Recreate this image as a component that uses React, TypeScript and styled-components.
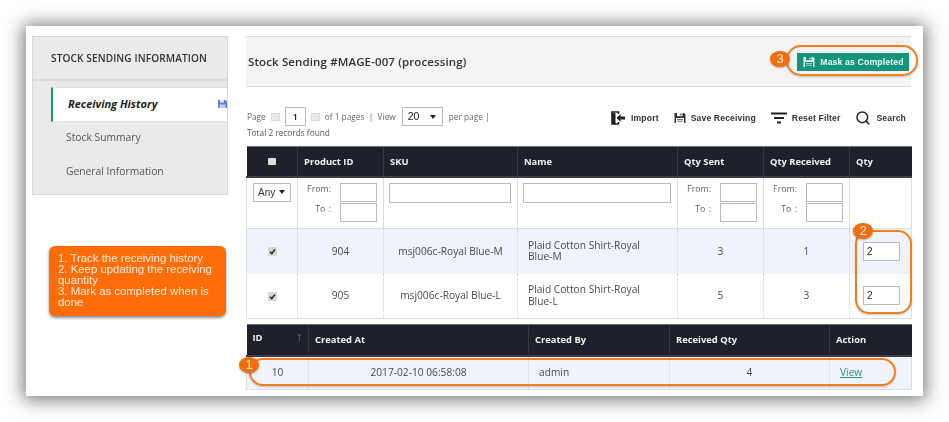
import React from "react";
import styled, { createGlobalStyle } from "styled-components";
import { Search } from "lucide-react";

const Global = createGlobalStyle`
  html, body { margin: 0; padding: 0; background: #fff; }
  body { font-family: "Open Sans", "Liberation Sans", sans-serif; color: #444; overflow: hidden; }
  * { box-sizing: border-box; }
`;

const Page = styled.div`
  width: 949px;
  height: 422px;
  padding: 26px;
`;
const Sheet = styled.div`
  position: relative;
  width: 897px;
  height: 370px;
  background: #fff;
  padding: 10px 12px 0 6px;
  display: flex;
  gap: 18px;
  box-shadow: 0 1px 17px 3px rgba(0, 0, 0, 0.52);
  filter: blur(0.45px);
`;
const Side = styled.aside`
  width: 196px;
  flex: none;
`;
const SideBox = styled.div`
  height: 159px;
  background: #eaeaea;
  border: 1px solid #d5d7de;
`;
const SideTitle = styled.h2`
  margin: 0;
  height: 44px;
  border-bottom: 2px solid #d8dae0;
  padding: 0 0 0 18px;
  font-size: 10.1px;
  line-height: 42px;
  font-weight: 600;
  color: #333;
  letter-spacing: 0.1px;
`;
const SideNav = styled.nav`
  padding: 6px 0 0 18px;
  display: flex;
  flex-direction: column;
`;
const ActiveItem = styled.a`
  position: relative;
  height: 35px;
  background: #fff;
  border-left: 2px solid #1b9a80;
  border-top: 1px solid #dfe0e5;
  border-bottom: 1px solid #dfe0e5;
  padding-left: 15px;
  font-size: 11px;
  line-height: 31px;
  font-weight: 700;
  font-style: italic;
  color: #222;
`;
const SideIcon = styled.svg`
  position: absolute;
  right: 0;
  top: 12px;
`;
const NavItem = styled.a`
  height: 34px;
  padding-left: 15px;
  font-size: 10.3px;
  line-height: 31px;
  color: #555;
`;
const Callout = styled.div`
  margin: 51px 0 0 17px;
  width: 177px;
  height: 70px;
  background: #ff6d0a;
  border-radius: 6px;
  padding: 7px 8px 0 9px;
  font-family: "Liberation Sans", Arial, sans-serif;
  font-size: 11.4px;
  line-height: 11.1px;
  color: #ffeedd;
  box-shadow: 0 2px 3px rgba(0, 0, 0, 0.45);
`;
const Main = styled.main`
  width: 665px;
  flex: none;
`;
const Head = styled.header`
  height: 51px;
  background: #f4f4f4;
  border-top: 1px solid #dcdde2;
  border-bottom: 1px solid #dcdde2;
  padding: 0 2px;
  display: flex;
  align-items: center;
  justify-content: space-between;
`;
const Title = styled.h1`
  margin: 0;
  font-size: 11.5px;
  font-weight: 600;
  color: #333;
  letter-spacing: 0.12px;
`;
const Complete = styled.button`
  width: 112px;
  height: 18px;
  border: 0;
  padding: 0 0 0 1px;
  background: #14957b;
  color: #eafff8;
  font-family: "Liberation Sans", Arial, sans-serif;
  font-size: 8.7px;
  font-weight: 700;
  letter-spacing: 0.14px;
  display: flex;
  align-items: center;
  justify-content: center;
  gap: 5px;
`;
const Bar = styled.div`
  height: 59px;
  padding: 20px 5px 0 1px;
  display: flex;
  justify-content: space-between;
`;
const Pager = styled.div`
  font-size: 8.3px;
  color: #666;
  line-height: 15px;
`;
const PagerLine = styled.div`
  display: flex;
  align-items: center;
  gap: 3px;
  height: 19px;
`;
const Arrow = styled.span`
  width: 9px;
  height: 8px;
  background: #e8e8e8;
  border: 1px solid #d8d8d8;
  margin: 0 2px;
`;
const PageBox = styled.span`
  width: 21px;
  height: 19px;
  border: 1px solid #b8bac2;
  font-size: 9.5px;
  font-weight: 600;
  color: #222;
  text-align: center;
  line-height: 18px;
`;
const ViewBox = styled.span`
  width: 41px;
  height: 19px;
  border: 1px solid #b8bac2;
  margin: 0 3px;
  padding: 0 6px 0 5px;
  display: flex;
  align-items: center;
  justify-content: space-between;
  font-family: "Liberation Sans", Arial, sans-serif;
  font-size: 10.5px;
  color: #222;
`;
const Caret = styled.span`
  width: 0;
  height: 0;
  border-left: 3px solid transparent;
  border-right: 3px solid transparent;
  border-top: 4px solid #222;
`;
const Total = styled.div`
  margin-top: -1px;
  color: #555;
`;
const Tools = styled.div`
  display: flex;
  align-items: flex-start;
  gap: 15px;
  padding-top: 3px;
`;
const Tool = styled.span`
  display: flex;
  align-items: center;
  gap: 5px;
  height: 16px;
  font-family: "Liberation Sans", Arial, sans-serif;
  font-size: 8.6px;
  font-weight: 700;
  color: #333;
  letter-spacing: 0.15px;
`;
const Table = styled.table`
  width: 665px;
  table-layout: fixed;
  border-collapse: collapse;
  font-size: 10.2px;
`;
const Col = styled.col<{ $w: number }>`
  width: ${(p) => p.$w}px;
`;
const Th = styled.th<{ $h?: number }>`
  height: ${(p) => p.$h ?? 30}px;
  background: #1e212b;
  color: #f2f2f2;
  font-size: 9.4px;
  font-weight: 700;
  text-align: left;
  padding: 0 6px;
  border-left: 1px solid #34373f;
  border-top: 1px solid #6a6c72;
  border-bottom: 2px solid #3b3e46;
  &:first-child { border-left: 0; }
`;
const HeadCheck = styled.span`
  display: block;
  width: 8px;
  height: 7px;
  margin: 0 auto;
  background: #ddd;
  border-radius: 1px;
`;
const IdHead = styled.div`
  display: flex;
  justify-content: space-between;
  margin-top: -4px;
`;
const SortMark = styled.span`
  font-weight: 400;
  color: #7c7f87;
  font-size: 12px;
  line-height: 12px;
`;
const FilterTd = styled.td`
  height: 52px;
  vertical-align: top;
  border: 1px solid #dcdde3;
  padding: 5px 6px 5px 5px;
  background: #fff;
`;
const AnyBox = styled.span`
  width: 38px;
  height: 19px;
  margin-left: 1px;
  border: 1px solid #b8bac2;
  display: flex;
  align-items: center;
  justify-content: space-between;
  padding: 0 5px 0 4px;
  font-family: "Liberation Sans", Arial, sans-serif;
  font-size: 10px;
  color: #333;
`;
const Range = styled.div`
  display: grid;
  grid-template-columns: auto 37px;
  justify-content: end;
  align-items: start;
  gap: 1px 9px;
  font-size: 8.8px;
  color: #666;
`;
const RangeLabel = styled.span`
  justify-self: end;
  line-height: 13px;
  word-spacing: 1px;
`;
const Field = styled.input<{ $h?: number }>`
  display: block;
  width: 100%;
  height: ${(p) => p.$h ?? 19}px;
  margin: 0;
  padding: 0 3px;
  border: 1px solid #b8bac2;
  background: #fff;
  outline: 0;
  font-family: "Liberation Sans", Arial, sans-serif;
  font-size: 10px;
  color: #222;
`;
const Row = styled.tr<{ $alt?: boolean }>`
  background: ${(p) => (p.$alt ? "#f0f3fb" : "#fff")};
`;
const Td = styled.td<{ $left?: boolean; $h?: number; $pad?: number }>`
  height: ${(p) => p.$h ?? 45}px;
  padding: 0 ${(p) => p.$pad ?? 10}px 0 10px;
  text-align: ${(p) => (p.$left ? "left" : "center")};
  line-height: 11.5px;
  color: #4a4a4a;
  border-left: 1px dotted #cfd1d7;
  &:first-child { border-left: 1px solid #dcdde3; }
  &:last-child { border-right: 1px solid #dcdde3; }
  tr:last-child > & { border-bottom: 1px solid #dcdde3; }
`;
const Check = styled.span`
  display: inline-flex;
  align-items: center;
  justify-content: center;
  width: 9px;
  height: 9px;
  background: #d6d6d6;
  border-radius: 1px;
  vertical-align: middle;
`;
const QtyField = styled(Field)`
  width: 37px;
  margin-left: 3px;
`;
const Spacer = styled.div`
  height: 5px;
`;
const ViewLink = styled.a`
  color: #1f9a82;
  text-decoration: underline;
`;
const Ring = styled.div<{ $x: number; $y: number; $w: number; $h: number; $r: number }>`
  position: absolute;
  left: ${(p) => p.$x}px;
  top: ${(p) => p.$y}px;
  width: ${(p) => p.$w}px;
  height: ${(p) => p.$h}px;
  border: 2px solid #f27f1c;
  border-radius: ${(p) => p.$r}px;
  box-shadow: 0 1px 2px rgba(0, 0, 0, 0.22);
  pointer-events: none;
`;
const Badge = styled.div<{ $x: number; $y: number }>`
  position: absolute;
  left: ${(p) => p.$x}px;
  top: ${(p) => p.$y}px;
  width: 20px;
  height: 16px;
  border-radius: 50%;
  background: #f26d0c;
  color: #ffeedd;
  font-family: "Liberation Sans", Arial, sans-serif;
  font-size: 13px;
  line-height: 16px;
  text-align: center;
  box-shadow: 0 1px 2px rgba(0, 0, 0, 0.3);
`;

const Floppy = ({ size = 12, body = "#333", light = "#fff" }: { size?: number; body?: string; light?: string }) => (
  <svg width={size} height={size} viewBox="0 0 12 12">
    <path d="M0.5 1h9.5l1.5 1.5v8.5h-11z" fill={body} />
    <rect x="3" y="1" width="5.5" height="3.2" fill={light} />
    <rect x="6.3" y="1.5" width="1.2" height="2" fill={body} />
    <rect x="2" y="6" width="8" height="5" fill={light} />
    <path d="M3 7.5h6M3 9.2h6" stroke={body} strokeWidth="0.7" />
  </svg>
);

const ImportIcon = () => (
  <svg width="15" height="14" viewBox="0 0 15 14">
    <path d="M7.5 3V1H1v12h6.5v-2" fill="none" stroke="#222" strokeWidth="1.6" />
    <path d="M1 1l3.5 1.4v11.2L1 13z" fill="#222" />
    <path d="M14 5.5H9.5V3L5.5 7l4 4V8.5H14z" fill="#222" />
  </svg>
);

const FilterIcon = () => (
  <svg width="16" height="12" viewBox="0 0 16 12">
    <path d="M0 1.5h16M3 6h10M6 10.5h4" stroke="#222" strokeWidth="1.8" />
  </svg>
);

const Tick = () => (
  <svg width="7" height="7" viewBox="0 0 7 7">
    <path d="M1 3.8l1.8 1.8L6 1.4" fill="none" stroke="#222" strokeWidth="1.5" />
  </svg>
);

const RangeFilter = () => (
  <Range>
    <RangeLabel>From:</RangeLabel>
    <Field readOnly $h={19} />
    <RangeLabel>To :</RangeLabel>
    <Field readOnly $h={19} />
  </Range>
);

const rows = [
  { id: "904", sku: "msj006c-Royal Blue-M", name: "Plaid Cotton Shirt-Royal Blue-M", sent: "3", rec: "1", alt: true },
  { id: "905", sku: "msj006c-Royal Blue-L", name: "Plaid Cotton Shirt-Royal Blue-L", sent: "5", rec: "3", alt: false },
];

export default function App() {
  return (
    <Page>
      <Global />
      <Sheet>
        <Side>
          <SideBox>
            <SideTitle>STOCK SENDING INFORMATION</SideTitle>
            <SideNav>
              <ActiveItem>
                Receiving History
                <SideIcon width="9" height="8" viewBox="0 0 9 8">
                  <path d="M0 0h7.5L9 1.5V8H0z" fill="#5b83c4" />
                  <rect x="2" y="0" width="4" height="2.6" fill="#dfe7f5" />
                  <rect x="1.5" y="4.5" width="6" height="3.5" fill="#b9cbe8" />
                </SideIcon>
              </ActiveItem>
              <NavItem>Stock Summary</NavItem>
              <NavItem>General Information</NavItem>
            </SideNav>
          </SideBox>
          <Callout>
            1. Track the receiving history
            <br />
            2. Keep updating the receiving quantity
            <br />
            3. Mark as completed when is done
          </Callout>
        </Side>
        <Main>
          <Head>
            <Title>Stock Sending #MAGE-007 (processing)</Title>
            <Complete>
              <Floppy size={12} body="#d9efe9" light="#14957b" />
              Mask as Completed
            </Complete>
          </Head>
          <Bar>
            <Pager>
              <PagerLine>
                Page <Arrow /> <PageBox>1</PageBox> <Arrow /> of 1 pages &nbsp;|&nbsp; View
                <ViewBox>
                  20 <Caret />
                </ViewBox>
                per page |
              </PagerLine>
              <Total>Total 2 records found</Total>
            </Pager>
            <Tools>
              <Tool>
                <ImportIcon /> Import
              </Tool>
              <Tool>
                <Floppy /> Save Receiving
              </Tool>
              <Tool>
                <FilterIcon /> Reset Filter
              </Tool>
              <Tool>
                <Search size={16} strokeWidth={2.2} color="#222" /> Search
              </Tool>
            </Tools>
          </Bar>
          <Table>
            <colgroup>
              <Col $w={51} />
              <Col $w={86} />
              <Col $w={134} />
              <Col $w={160} />
              <Col $w={86} />
              <Col $w={86} />
              <Col $w={62} />
            </colgroup>
            <thead>
              <tr>
                <Th>
                  <HeadCheck />
                </Th>
                <Th>Product ID</Th>
                <Th>SKU</Th>
                <Th>Name</Th>
                <Th>Qty Sent</Th>
                <Th>Qty Received</Th>
                <Th>Qty</Th>
              </tr>
            </thead>
            <tbody>
              <tr>
                <FilterTd>
                  <AnyBox>
                    Any <Caret />
                  </AnyBox>
                </FilterTd>
                <FilterTd>
                  <RangeFilter />
                </FilterTd>
                <FilterTd>
                  <Field readOnly $h={20} />
                </FilterTd>
                <FilterTd>
                  <Field readOnly $h={20} />
                </FilterTd>
                <FilterTd>
                  <RangeFilter />
                </FilterTd>
                <FilterTd>
                  <RangeFilter />
                </FilterTd>
                <FilterTd />
              </tr>
              {rows.map((r) => (
                <Row key={r.id} $alt={r.alt}>
                  <Td>
                    <Check>
                      <Tick />
                    </Check>
                  </Td>
                  <Td>{r.id}</Td>
                  <Td>{r.sku}</Td>
                  <Td $left $pad={24}>{r.name}</Td>
                  <Td>{r.sent}</Td>
                  <Td>{r.rec}</Td>
                  <Td $left>
                    <QtyField readOnly value="2" />
                  </Td>
                </Row>
              ))}
            </tbody>
          </Table>
          <Spacer />
          <Table>
            <colgroup>
              <Col $w={62} />
              <Col $w={220} />
              <Col $w={141} />
              <Col $w={160} />
              <Col $w={82} />
            </colgroup>
            <thead>
              <tr>
                <Th $h={31}>
                  <IdHead>
                    ID <SortMark>↑</SortMark>
                  </IdHead>
                </Th>
                <Th $h={31}>Created At</Th>
                <Th $h={31}>Created By</Th>
                <Th $h={31}>Received Qty</Th>
                <Th $h={31}>Action</Th>
              </tr>
            </thead>
            <tbody>
              <Row $alt>
                <Td $h={34}>10</Td>
                <Td $h={34}>2017-02-10 06:58:08</Td>
                <Td $left $h={34}>admin</Td>
                <Td $h={34}>4</Td>
                <Td $left $h={34}>
                  <ViewLink>View</ViewLink>
                </Td>
              </Row>
            </tbody>
          </Table>
        </Main>
        <Ring $x={760} $y={19} $w={132} $h={31} $r={15} />
        <Badge $x={744} $y={25}>3</Badge>
        <Ring $x={829} $y={204} $w={57} $h={84} $r={14} />
        <Badge $x={827} $y={197}>2</Badge>
        <Ring $x={223} $y={332} $w={647} $h={28} $r={14} />
        <Badge $x={213} $y={331}>1</Badge>
      </Sheet>
    </Page>
  );
}
